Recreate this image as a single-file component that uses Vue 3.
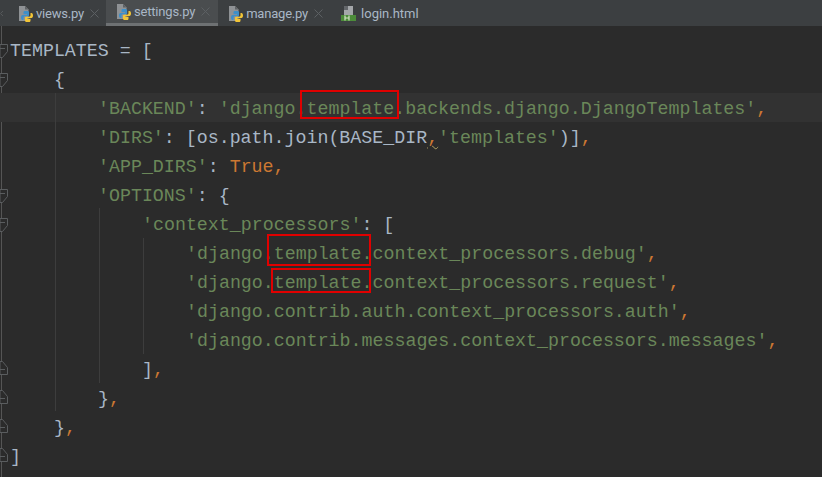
<script setup>
const S = 's', P = 'p', C = 'c', K = 'k'
const lines = [
  { fold: 'open', indent: 0, parts: [[P, 'TEMPLATES = [']] },
  { fold: 'open', indent: 4, parts: [[P, '{']] },
  { indent: 8, current: true, parts: [[S, "'BACKEND'"], [P, ': '], [S, "'django.template.backends.django.DjangoTemplates'"], [C, ',']] },
  { indent: 8, parts: [[S, "'DIRS'"], [P, ': [os.path.join(BASE_DIR'], [K, ','], [S, "'templates'"], [P, ')]'], [C, ',']] },
  { indent: 8, parts: [[S, "'APP_DIRS'"], [P, ': '], [C, 'True,']] },
  { fold: 'open', indent: 8, parts: [[S, "'OPTIONS'"], [P, ': {']] },
  { fold: 'open', indent: 12, parts: [[S, "'context_processors'"], [P, ': [']] },
  { indent: 16, parts: [[S, "'django.template.context_processors.debug'"], [C, ',']] },
  { indent: 16, parts: [[S, "'django.template.context_processors.request'"], [C, ',']] },
  { indent: 16, parts: [[S, "'django.contrib.auth.context_processors.auth'"], [C, ',']] },
  { indent: 16, parts: [[S, "'django.contrib.messages.context_processors.messages'"], [C, ',']] },
  { fold: 'close', indent: 12, parts: [[P, ']'], [C, ',']] },
  { fold: 'close', indent: 8, parts: [[P, '}'], [C, ',']] },
  { fold: 'close', indent: 4, parts: [[P, '}'], [C, ',']] },
  { fold: 'close', indent: 0, parts: [[P, ']']] }
]
const tabs = [
  { name: 'views.py', kind: 'py' },
  { name: 'settings.py', kind: 'py', active: true },
  { name: 'manage.py', kind: 'py' },
  { name: 'login.html', kind: 'html' }
]
const guides = [
  { x: 55, top: 93, height: 318 },
  { x: 99, top: 208, height: 175 },
  { x: 143, top: 238, height: 116 }
]
const boxes = [
  { x: 300, y: 90, w: 99, h: 29 },
  { x: 267, y: 234, w: 104, h: 32 },
  { x: 271, y: 268, w: 100, h: 25 }
]
</script>

<template>
  <div class="window">
    <div class="tabs">
      <svg class="scroll-left" width="8" height="26" viewBox="0 0 8 26">
        <path d="M3 11l-2.500 2.500L3 16" stroke="#55585a" fill="none" />
      </svg>
      <div v-for="t in tabs" :key="t.name" class="tab" :class="{ active: t.active, html: t.kind === 'html' }">
        <svg class="icon" width="16" height="17" viewBox="0 0 16 17">
          <template v-if="t.kind === 'py'">
            <path d="M0 1h6l3.500 3.500V16H0z" fill="#8f9295" />
            <path d="M6 1l3.500 3.500H6z" fill="#5f6265" />
            <g transform="translate(0 1)">
              <path d="M5.500 5H8.500C9.500 5 10 5.600 10 6.500V9c0 .8-.6 1.300-1.300 1.300H6c-1 0-1.500.6-1.500 1.400V14H3.500C2.600 14 2 13 2 11.500 2 10 2.600 9 3.500 9H8V8.300H4.500V6.500C4.500 5.600 4.900 5 5.500 5z" fill="#3d8fc9" />
              <path transform="rotate(180 8 10.500)" d="M5.500 5H8.500C9.500 5 10 5.600 10 6.500V9c0 .8-.6 1.300-1.300 1.300H6c-1 0-1.500.6-1.500 1.400V14H3.500C2.600 14 2 13 2 11.500 2 10 2.600 9 3.500 9H8V8.300H4.500V6.500C4.500 5.600 4.900 5 5.500 5z" fill="#f2c537" />
            </g>
          </template>
          <template v-else>
            <path d="M3 1h9v9H3z" fill="#a4a7aa" />
            <path d="M3 1h4v4H3z" fill="#63666a" />
            <rect x="0" y="10" width="15" height="6" fill="#4c8c3a" />
            <path d="M4 10.500v5M4 13h4M8 10.500v5" stroke="#d5e4c8" stroke-width="1.200" fill="none" />
          </template>
        </svg>
        <span class="tab-name">{{ t.name }}</span>
        <svg v-if="t.kind === 'py'" class="close" width="9" height="9" viewBox="0 0 9 9">
          <path d="M.5.500l8 8M8.500.500l-8 8" stroke="#5c6063" fill="none" />
        </svg>
      </div>
    </div>
    <div class="editor">
      <div class="gutter-line"></div>
      <div
        v-for="(l, i) in lines"
        :key="i"
        class="line"
        :class="{ current: l.current }"
      >
        <svg v-if="l.fold === 'open'" class="fold" width="8" height="16" viewBox="0 0 8 16">
          <path d="M0 1.500h7.500v7L2.500 14.500H0z" stroke="#5a5d5f" fill="#2b2b2b" />
          <path d="M0 5.500h5" stroke="#5a5d5f" fill="none" />
        </svg>
        <svg v-else-if="l.fold === 'close'" class="fold close-fold" width="8" height="16" viewBox="0 0 8 16">
          <path d="M0 14.500h7.500v-7L2.500 1.500H0z" stroke="#5a5d5f" fill="#2b2b2b" />
          <path d="M0 9.500h5" stroke="#5a5d5f" fill="none" />
        </svg>
        <span class="code" :style="{ paddingLeft: l.indent * 11 + 'px' }"><span v-for="(p, j) in l.parts" :key="j" :class="p[0]">{{ p[1] }}</span></span>
      </div>
      <div v-for="(g, i) in guides" :key="'g' + i" class="guide" :style="{ left: g.x + 'px', top: g.top - 26 + 'px', height: g.height + 'px' }"></div>
    </div>
    <div v-for="(b, i) in boxes" :key="'b' + i" class="mark" :style="{ left: b.x + 'px', top: b.y + 'px', width: b.w + 'px', height: b.h + 'px' }"></div>
  </div>
</template>

<style scoped>
.window {
  position: relative;
  width: 822px;
  height: 477px;
  overflow: hidden;
  background: #2b2b2b;
}
.tabs {
  display: flex;
  height: 26px;
  background: #3c3f41;
}
.scroll-left {
  flex: none;
}
.tab {
  display: flex;
  align-items: center;
  height: 26px;
  box-sizing: border-box;
  padding: 0 7px 0 11px;
  font-family: Roboto, sans-serif;
  font-size: 13px;
  letter-spacing: -0.2px;
  color: #a9b7c6;
}
.tab.active {
  padding-right: 8px;
  background: #4a4d4f;
  border-bottom: 3px solid #6e7173;
}
.tab.html {
  padding-left: 11px;
  letter-spacing: 0;
}
.icon {
  flex: none;
  margin-right: 1px;
}
.tab.html .icon {
  margin-right: 4px;
}
.tab-name {
  white-space: nowrap;
}
.close {
  margin-left: 6px;
}
.editor {
  position: relative;
  padding-top: 9px;
}
.gutter-line {
  position: absolute;
  left: 1px;
  top: 0;
  bottom: -10px;
  width: 1px;
  background: #555;
}
.line {
  position: relative;
  height: 29px;
  line-height: 29px;
}
.line.current {
  background: #323232;
}
.fold {
  position: absolute;
  left: 0;
  top: 8px;
}
.close-fold {
  top: 6px;
}
.code {
  display: block;
  margin-left: 10px;
  padding-top: 2px;
  font-family: "Liberation Mono", monospace;
  font-size: 18.3px;
  white-space: pre;
}
.p { color: #a9b7c6; }
.s { color: #6a8759; }
.c { color: #cc7832; }
.k { color: #cc7832; text-decoration: underline wavy #b0a060 1px; text-underline-offset: 2px; }
.guide {
  position: absolute;
  width: 1px;
  background: #3d3d3d;
}
.mark {
  position: absolute;
  box-sizing: border-box;
  border: 2px solid #e00000;
}
</style>
